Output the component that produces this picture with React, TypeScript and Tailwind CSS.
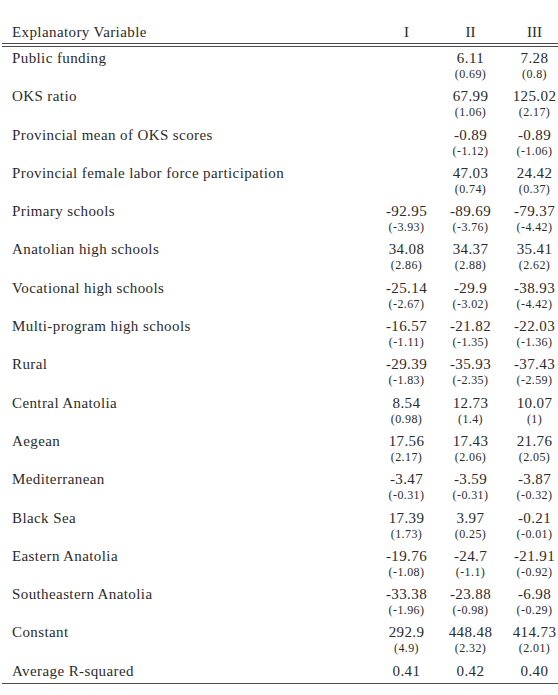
import React from "react";

type Row = { label: string; v: (string | null)[]; s?: (string | null)[] };

const rows: Row[] = [
  { label: "Public funding", v: [null, "6.11", "7.28"], s: [null, "(0.69)", "(0.8)"] },
  { label: "OKS ratio", v: [null, "67.99", "125.02"], s: [null, "(1.06)", "(2.17)"] },
  { label: "Provincial mean of OKS scores", v: [null, "-0.89", "-0.89"], s: [null, "(-1.12)", "(-1.06)"] },
  { label: "Provincial female labor force participation", v: [null, "47.03", "24.42"], s: [null, "(0.74)", "(0.37)"] },
  { label: "Primary schools", v: ["-92.95", "-89.69", "-79.37"], s: ["(-3.93)", "(-3.76)", "(-4.42)"] },
  { label: "Anatolian high schools", v: ["34.08", "34.37", "35.41"], s: ["(2.86)", "(2.88)", "(2.62)"] },
  { label: "Vocational high schools", v: ["-25.14", "-29.9", "-38.93"], s: ["(-2.67)", "(-3.02)", "(-4.42)"] },
  { label: "Multi-program high schools", v: ["-16.57", "-21.82", "-22.03"], s: ["(-1.11)", "(-1.35)", "(-1.36)"] },
  { label: "Rural", v: ["-29.39", "-35.93", "-37.43"], s: ["(-1.83)", "(-2.35)", "(-2.59)"] },
  { label: "Central Anatolia", v: ["8.54", "12.73", "10.07"], s: ["(0.98)", "(1.4)", "(1)"] },
  { label: "Aegean", v: ["17.56", "17.43", "21.76"], s: ["(2.17)", "(2.06)", "(2.05)"] },
  { label: "Mediterranean", v: ["-3.47", "-3.59", "-3.87"], s: ["(-0.31)", "(-0.31)", "(-0.32)"] },
  { label: "Black Sea", v: ["17.39", "3.97", "-0.21"], s: ["(1.73)", "(0.25)", "(-0.01)"] },
  { label: "Eastern Anatolia", v: ["-19.76", "-24.7", "-21.91"], s: ["(-1.08)", "(-1.1)", "(-0.92)"] },
  { label: "Southeastern Anatolia", v: ["-33.38", "-23.88", "-6.98"], s: ["(-1.96)", "(-0.98)", "(-0.29)"] },
  { label: "Constant", v: ["292.9", "448.48", "414.73"], s: ["(4.9)", "(2.32)", "(2.01)"] },
];

function Cell({ v, s }: { v: string | null; s?: string | null }) {
  return (
    <div className="pl-[17px] text-center">
      <div className="h-[17px] leading-[17px] text-[15px] tracking-[0.4px] whitespace-nowrap">{v ?? ""}</div>
      {s !== undefined && (
        <div className="mt-[1px] h-[13px] leading-[13px] text-[12px] tracking-[0.4px] whitespace-nowrap">{s ?? ""}</div>
      )}
    </div>
  );
}

export default function App() {
  return (
    <div className="w-[558px] h-[695px] bg-white text-[#2b2b2b] font-['Liberation_Serif',serif] overflow-hidden">
      <div className="pt-[24.4px]">
        <div className="grid grid-cols-[1fr_64px_64px_64px]">
          <div className="pl-3 h-[17px] leading-[17px] text-[15px] tracking-[0.4px] whitespace-nowrap">Explanatory Variable</div>
          <div className="pl-[17px] text-center h-[17px] leading-[17px] text-[15px]">I</div>
          <div className="pl-[17px] text-center h-[17px] leading-[17px] text-[15px]">II</div>
          <div className="pl-[17px] text-center h-[17px] leading-[17px] text-[15px]">III</div>
        </div>
        <div className="ml-[2px] mt-[1.6px] h-[4px] border-y border-[#4a4a4a]" />
        {rows.map((r) => (
          <div key={r.label} className="grid grid-cols-[1fr_64px_64px_64px] h-[38.3px] pt-[3px]">
            <div className="pl-3 h-[17px] leading-[17px] text-[15px] tracking-[0.4px] whitespace-nowrap">{r.label}</div>
            {r.v.map((v, i) => (
              <Cell key={i} v={v} s={r.s ? r.s[i] : undefined} />
            ))}
          </div>
        ))}
        <div className="grid grid-cols-[1fr_64px_64px_64px] h-[23px] pt-[3px]">
          <div className="pl-3 h-[17px] leading-[17px] text-[15px] tracking-[0.4px] whitespace-nowrap">Average R-squared</div>
          <Cell v="0.41" />
          <Cell v="0.42" />
          <Cell v="0.40" />
        </div>
        <div className="ml-[2px] h-0 border-t border-[#4a4a4a]" />
      </div>
    </div>
  );
}
